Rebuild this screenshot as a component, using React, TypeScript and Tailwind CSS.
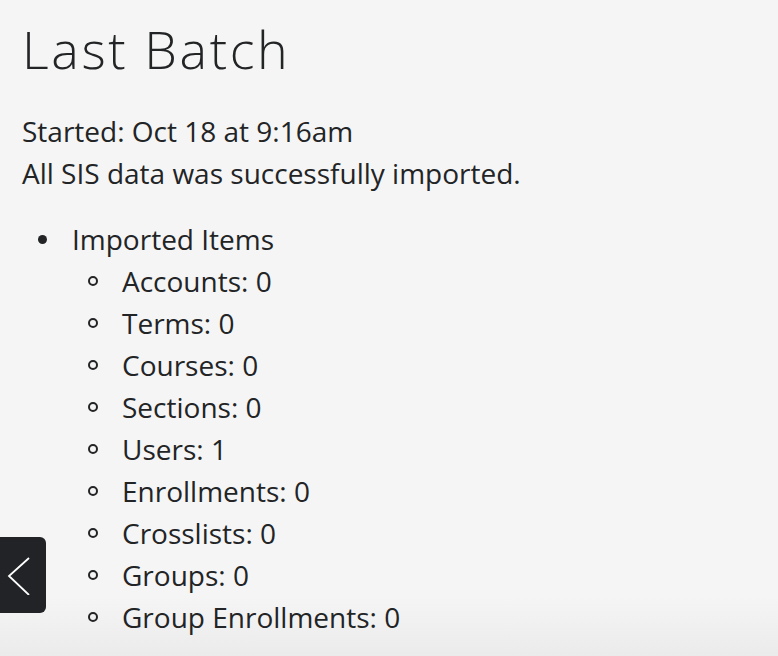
const counts = [
  ["Accounts", 0],
  ["Terms", 0],
  ["Courses", 0],
  ["Sections", 0],
  ["Users", 1],
  ["Enrollments", 0],
  ["Crosslists", 0],
  ["Groups", 0],
  ["Group Enrollments", 0],
] as const;

export default function App() {
  return (
    <div className="relative h-[656px] w-[778px] overflow-hidden bg-[#f5f5f5] text-[#222426] font-['Open_Sans',sans-serif]">
      <div className="pointer-events-none absolute inset-x-0 bottom-0 h-[60px] bg-gradient-to-b from-transparent to-[#ebebeb]" />
      <div className="relative px-[22px] pt-[17px]">
        <h1 className="text-[52px] font-light leading-[64px] tracking-[2.6px]">
          Last Batch
        </h1>
        <div className="mt-[29px] text-[28px] leading-[42px]">
          <p>Started: Oct 18 at 9:16am</p>
          <p>All SIS data was successfully imported.</p>
        </div>
        <ul className="mt-[24px] text-[28px] leading-[42px]">
          <li>
            <div className="flex items-center">
              <span className="ml-[16px] mr-[25px] h-[9px] w-[9px] rounded-full bg-[#222426]" />
              Imported Items
            </div>
            <ul className="pl-[50px]">
              {counts.map(([name, n]) => (
                <li key={name} className="flex items-center">
                  <span className="ml-[16px] mr-[24px] h-[10px] w-[10px] rounded-full border-2 border-[#222426]" />
                  {name}: {n}
                </li>
              ))}
            </ul>
          </li>
        </ul>
      </div>
      <button className="absolute left-0 top-[537px] flex h-[76px] w-[46px] items-center rounded-r-[6px] bg-[#222327] pl-[7px]">
        <svg width="24" height="40" viewBox="0 0 24 40" fill="none" stroke="white" strokeWidth="1.8">
          <path d="M22 3 L2 21 L22 40" />
        </svg>
      </button>
    </div>
  );
}
